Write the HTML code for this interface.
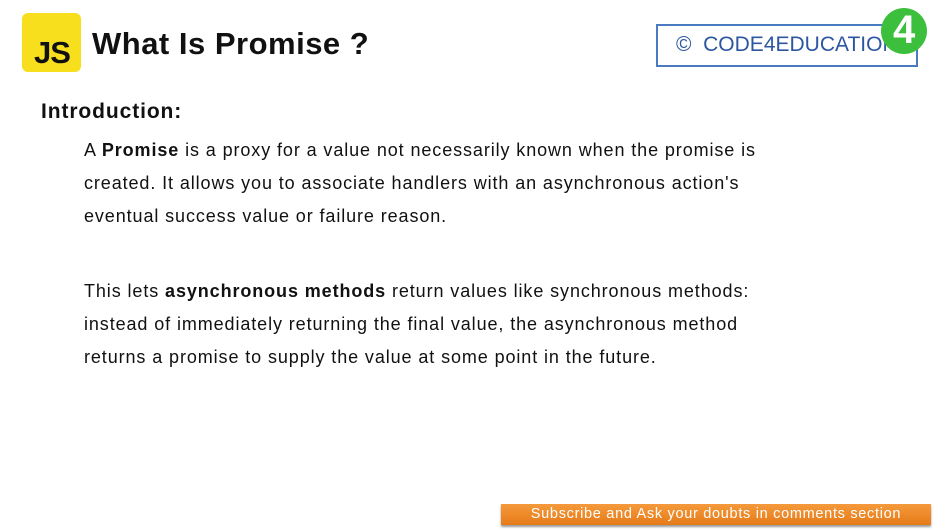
<!DOCTYPE html>
<html><head><style>
body{margin:0;width:942px;height:530px;background:#fff;position:relative;overflow:hidden;font-family:"Liberation Sans",sans-serif;}
.abs{position:absolute;}
.js{left:22px;top:13px;width:59px;height:59px;background:#f7df1e;border-radius:6px;}
.js span{position:absolute;left:12px;top:22px;font-weight:bold;font-size:31px;color:#111;letter-spacing:-1px}
.title{left:92px;top:26px;font-size:31px;font-weight:bold;color:#111;letter-spacing:0.5px}
.box{left:656px;top:24px;width:258px;height:39px;border:2px solid #4a7ac0;}
.box span{position:absolute;left:18px;top:7px;font-size:21px;color:#2c57a0;white-space:nowrap}
.logo{left:881px;top:8px;width:46px;height:46px;border-radius:50%;background:#3cbf3c;}
p{margin:0;position:absolute;left:84px;font-size:18px;color:#111;line-height:33px;letter-spacing:0.9px;white-space:nowrap}
.intro{left:41px;top:100px;font-size:21px;font-weight:bold;color:#111;letter-spacing:0.9px}
.bar{left:501px;top:504px;width:430px;height:21px;background:linear-gradient(#f59a3c,#e67a18);box-shadow:0 2px 2px #999;color:#fff;font-size:14.5px;text-align:center;line-height:21px;letter-spacing:0.7px;white-space:nowrap}
</style></head><body>
<div class="abs js"><span>JS</span></div>
<div class="abs title">What Is Promise ?</div>
<div class="abs box"><span>©&nbsp; CODE4EDUCATION</span></div>
<div class="abs logo"><span style="position:absolute;left:12px;top:0;font-size:40px;color:#fff;font-weight:bold">4</span></div>
<div class="abs intro">Introduction:</div>
<p style="top:134px">A <b>Promise</b> is a proxy for a value not necessarily known when the promise is<br>created. It allows you to associate handlers with an asynchronous action's<br>eventual success value or failure reason.</p>
<p style="top:275px">This lets <b>asynchronous methods</b> return values like synchronous methods:<br>instead of immediately returning the final value, the asynchronous method<br>returns a promise to supply the value at some point in the future.</p>
<div class="abs bar">Subscribe and Ask your doubts in comments section</div>
</body></html>
